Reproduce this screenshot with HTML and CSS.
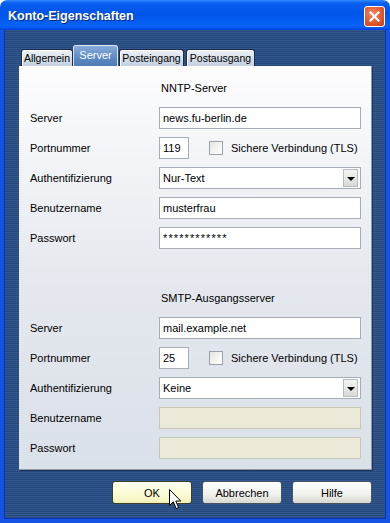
FILE: index.html
```html
<!DOCTYPE html>
<html lang="de">
<head>
    <meta charset="UTF-8">
    <meta name="viewport" content="width=device-width, initial-scale=1.0">
    <title>Konto-Eigenschaften</title>
    <link rel="stylesheet" href="styles.css">
</head>
<body>
    <div class="window">
        <div class="titlebar">
            <span class="title">Konto-Eigenschaften</span>
            <button class="close" aria-label="Schließen">
                <svg width="11" height="11" viewBox="0 0 11 11">
                    <path d="M1.5 1.5 L9.5 9.5 M9.5 1.5 L1.5 9.5" stroke="#fff" stroke-width="2.2" stroke-linecap="square"/>
                </svg>
            </button>
        </div>

        <div class="frame">
            <div class="tabs">
                <span class="tab tab-allgemein">Allgemein</span>
                <span class="tab tab-server active">Server</span>
                <span class="tab tab-posteingang">Posteingang</span>
                <span class="tab tab-postausgang">Postausgang</span>
            </div>

            <div class="panel">
                <div class="group">
                    <span></span><span class="heading">NNTP-Server</span>

                    <label>Server</label>
                    <div class="field">news.fu-berlin.de</div>

                    <label>Portnummer</label>
                    <div class="port-row">
                        <div class="field port">119</div>
                        <span class="check"></span>
                        <span class="check-label">Sichere Verbindung (TLS)</span>
                    </div>

                    <label>Authentifizierung</label>
                    <div class="field select">Nur-Text<span class="arrow"></span></div>

                    <label>Benutzername</label>
                    <div class="field">musterfrau</div>

                    <label>Passwort</label>
                    <div class="field password">************</div>
                </div>

                <div class="group smtp">
                    <span></span><span class="heading">SMTP-Ausgangsserver</span>

                    <label>Server</label>
                    <div class="field">mail.example.net</div>

                    <label>Portnummer</label>
                    <div class="port-row">
                        <div class="field port">25</div>
                        <span class="check"></span>
                        <span class="check-label">Sichere Verbindung (TLS)</span>
                    </div>

                    <label>Authentifizierung</label>
                    <div class="field select">Keine<span class="arrow"></span></div>

                    <label>Benutzername</label>
                    <div class="field disabled"></div>

                    <label>Passwort</label>
                    <div class="field disabled"></div>
                </div>
            </div>

            <div class="buttons">
                <button class="btn default">OK</button>
                <button class="btn">Abbrechen</button>
                <button class="btn">Hilfe</button>
            </div>
        </div>
    </div>

    <!-- mouse pointer over the OK button -->
    <svg class="cursor" width="13" height="21" viewBox="0 0 13 21">
        <path d="M0.5 0.5 L0.5 16.5 L4.3 12.8 L7.2 19.6 L9.6 18.6 L6.8 12 L11.8 12 Z" fill="#fff" stroke="#000" stroke-width="1"/>
    </svg>
</body>
</html>
```

FILE: styles.css
```css
body {
    margin: 0;
    background-color: #ffffff;
    font-family: 'Liberation Sans', Arial, sans-serif;
    font-size: 11px;
    color: #000;
}

.window {
    position: relative;
    width: 390px;
    height: 523px;
    display: flex;
    flex-direction: column;
}

/* title bar */
.titlebar {
    height: 30px;
    flex: none;
    display: flex;
    align-items: center;
    justify-content: space-between;
    padding: 0 5px 0 8px;
    border-radius: 7px 7px 0 0;
    background: linear-gradient(#2f8cff 0%, #0a5ef0 10%, #0054e8 45%, #0862f6 85%, #0659f0 93%, #003fd8 100%);
}

.title {
    color: #fff;
    font-weight: bold;
    font-size: 12.5px;
    text-shadow: 1px 1px 0 #0a2a7a;
    margin-top: 1px;
}

.close {
    width: 21px;
    height: 21px;
    margin-top: 2px;
    padding: 0;
    border: 1px solid #fff;
    border-radius: 3px;
    background: radial-gradient(circle at 40% 35%, #f08a64 0%, #e0582e 55%, #c8401a 100%);
    display: flex;
    align-items: center;
    justify-content: center;
}

/* window body */
.frame {
    flex: 1;
    display: flex;
    flex-direction: column;
    padding: 15px 10px 0 15px;
    border: 4px solid #1553e4;
    border-top: none;
    box-shadow: inset 1px 0 0 #0a35b8, inset -1px 0 0 #0a35b8, inset 0 -1px 0 #0a35b8;
    background: repeating-linear-gradient(#31578f 0px, #31578f 1px, #28497c 1px, #28497c 2px);
}

/* tabs */
.tabs {
    display: flex;
    align-items: flex-end;
    height: 21px;
    margin-left: 2px;
}

.tab {
    height: 16px;
    line-height: 16px;
    font-size: 10.5px;
    text-align: center;
    border: 1px solid #1c2c48;
    border-bottom: none;
    border-radius: 3px 3px 0 0;
    background: linear-gradient(#eef2f7, #c3d0e1);
    box-shadow: inset 1px 1px 0 #fff;
    white-space: nowrap;
}

.tab-allgemein { width: 50px; }
.tab-server { width: 43px; }
.tab-posteingang { width: 63px; margin-left: 1px; }
.tab-postausgang { width: 67px; margin-left: 2px; }

.tab.active {
    height: 20px;
    line-height: 18px;
    font-size: 11px;
    color: #fff;
    border-color: #dbe6f5;
    background: linear-gradient(#86acdc, #5d89c2 60%, #4f7bb6);
    box-shadow: none;
}

/* panel */
.panel {
    width: 353px;
    height: 404px;
    box-sizing: border-box;
    padding: 7px 11px;
    border-right: 1px solid #8f9aa8;
    border-bottom: 1px solid #8f9aa8;
    background: linear-gradient(#fdfdfe, #e4e8ee 55%, #dbe1e9);
    box-shadow: 1px 1px 0 #1d3560;
}

.group {
    display: grid;
    grid-template-columns: 129px 202px;
    grid-auto-rows: 30px;
    align-items: center;
}

.group.smtp {
    margin-top: 30px;
}

.heading {
    padding-left: 2px;
}

label {
    color: #000;
}

.field {
    height: 22px;
    line-height: 20px;
    box-sizing: border-box;
    border: 1px solid #a4adb8;
    background-color: #fff;
    padding-left: 3px;
    position: relative;
}

.field.password {
    letter-spacing: 1.1px;
}

.field.disabled {
    background-color: #ece9d8;
    border-color: #c9c7ba;
}

.port-row {
    display: flex;
    align-items: center;
}

.field.port {
    width: 30px;
}

.check {
    width: 12px;
    height: 12px;
    margin-left: 20px;
    border: 1px solid #9aa3ad;
    background: linear-gradient(135deg, #e6e6e0, #ffffff);
}

.check-label {
    margin-left: 8px;
}

.arrow {
    position: absolute;
    right: 2px;
    top: 1px;
    width: 15px;
    height: 18px;
    box-sizing: border-box;
    border: 1px solid #b4bcc6;
    background: linear-gradient(#f4f4f4, #d9d9d6);
}

.arrow::after {
    content: "";
    position: absolute;
    left: 3px;
    top: 7px;
    border-left: 4px solid transparent;
    border-right: 4px solid transparent;
    border-top: 4px solid #000;
}

/* buttons */
.buttons {
    display: flex;
    justify-content: flex-end;
    gap: 10px;
    margin-top: 11px;
    width: 353px;
}

.btn {
    width: 80px;
    height: 23px;
    padding: 0;
    font-family: 'Liberation Sans', Arial, sans-serif;
    font-size: 11px;
    color: #000;
    border: 1px solid #4a5260;
    border-radius: 3px;
    background: linear-gradient(#ffffff, #f0f0ec 60%, #d8d8d2);
}

.btn.default {
    border-color: #3e3e26;
    background: linear-gradient(#fffff0, #fbfbd2 60%, #f0f0b8);
}

.cursor {
    position: absolute;
    left: 169px;
    top: 489px;
}
```
